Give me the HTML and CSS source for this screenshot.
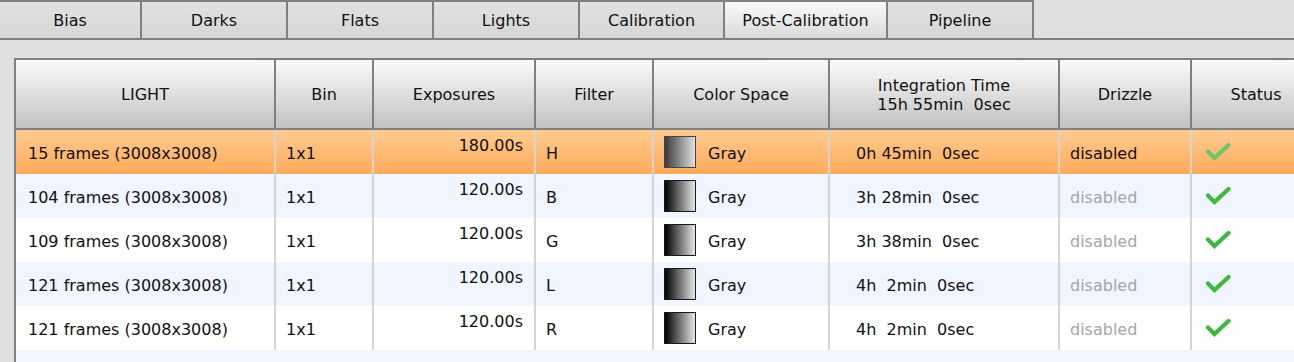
FILE: index.html
```html
<!DOCTYPE html>
<html>
<head>
<meta charset="utf-8">
<link rel="stylesheet" href="styles.css">
</head>
<body>
<div class="tabs">
  <div class="tab t1">Bias</div>
  <div class="tab">Darks</div>
  <div class="tab">Flats</div>
  <div class="tab">Lights</div>
  <div class="tab t5">Calibration</div>
  <div class="tab sel">Post-Calibration</div>
  <div class="tab">Pipeline</div>
</div>
<div class="panel">
  <div class="table">
    <div class="row head">
      <div class="hc first">LIGHT</div>
      <div class="hc">Bin</div>
      <div class="hc">Exposures</div>
      <div class="hc">Filter</div>
      <div class="hc">Color Space</div>
      <div class="hc two">Integration Time<br>15h 55min&nbsp; 0sec</div>
      <div class="hc">Drizzle</div>
      <div class="hc">Status</div>
    </div>

    <div class="row selrow">
      <div class="c first">15 frames (3008x3008)</div>
      <div class="c">1x1</div>
      <div class="c exp">180.00s</div>
      <div class="c">H</div>
      <div class="c cs"><span class="sw swsel"></span><span class="cst">Gray</span></div>
      <div class="c it">0h 45min&nbsp; 0sec</div>
      <div class="c">disabled</div>
      <div class="c st"><svg class="chk light" width="26" height="20" viewBox="0 0 26 20"><path d="M3 9.5 L9.5 16 L23.5 3"/></svg></div>
    </div>

    <div class="row alt">
      <div class="c first">104 frames (3008x3008)</div>
      <div class="c">1x1</div>
      <div class="c exp">120.00s</div>
      <div class="c">B</div>
      <div class="c cs"><span class="sw"></span><span class="cst">Gray</span></div>
      <div class="c it">3h 28min&nbsp; 0sec</div>
      <div class="c dis">disabled</div>
      <div class="c st"><svg class="chk" width="26" height="20" viewBox="0 0 26 20"><path d="M3 9.5 L9.5 16 L23.5 3"/></svg></div>
    </div>

    <div class="row">
      <div class="c first">109 frames (3008x3008)</div>
      <div class="c">1x1</div>
      <div class="c exp">120.00s</div>
      <div class="c">G</div>
      <div class="c cs"><span class="sw"></span><span class="cst">Gray</span></div>
      <div class="c it">3h 38min&nbsp; 0sec</div>
      <div class="c dis">disabled</div>
      <div class="c st"><svg class="chk" width="26" height="20" viewBox="0 0 26 20"><path d="M3 9.5 L9.5 16 L23.5 3"/></svg></div>
    </div>

    <div class="row alt">
      <div class="c first">121 frames (3008x3008)</div>
      <div class="c">1x1</div>
      <div class="c exp">120.00s</div>
      <div class="c">L</div>
      <div class="c cs"><span class="sw"></span><span class="cst">Gray</span></div>
      <div class="c it">4h&nbsp; 2min&nbsp; 0sec</div>
      <div class="c dis">disabled</div>
      <div class="c st"><svg class="chk" width="26" height="20" viewBox="0 0 26 20"><path d="M3 9.5 L9.5 16 L23.5 3"/></svg></div>
    </div>

    <div class="row">
      <div class="c first">121 frames (3008x3008)</div>
      <div class="c">1x1</div>
      <div class="c exp">120.00s</div>
      <div class="c">R</div>
      <div class="c cs"><span class="sw"></span><span class="cst">Gray</span></div>
      <div class="c it">4h&nbsp; 2min&nbsp; 0sec</div>
      <div class="c dis">disabled</div>
      <div class="c st"><svg class="chk" width="26" height="20" viewBox="0 0 26 20"><path d="M3 9.5 L9.5 16 L23.5 3"/></svg></div>
    </div>
  </div>
</div>
</body>
</html>
```

FILE: styles.css
```css
html, body {
  margin: 0;
  padding: 0;
}
body {
  width: 1294px;
  height: 362px;
  overflow: hidden;
  background: #e0e0e0;
  font-family: "DejaVu Sans", Verdana, sans-serif;
  font-size: 16px;
  color: #111;
}
.tabs {
  display: flex;
  height: 38px;
  border-bottom: 2px solid #808080;
}
.tab {
  box-sizing: border-box;
  width: 146px;
  height: 38px;
  border-top: 2px solid #808080;
  border-right: 2px solid #808080;
  background: linear-gradient(#e2e2e2, #d6d6d6);
  display: flex;
  align-items: center;
  justify-content: center;
  padding-top: 1px;
}
.tab.t1 { width: 142px; }
.tab.t5 { width: 145px; }
.tab.sel {
  width: 163px;
  background: linear-gradient(#fafafa, #dadada);
}
.panel {
  padding: 18px 0 0 14px;
}
.table {
  width: 1304px;
  height: 302px;
  border-top: 2px solid #808080;
  border-left: 2px solid #808080;
  background: #f0f5ff;
}
.row {
  display: grid;
  grid-template-columns: 258px 98px 162px 118px 176px 230px 132px 130px;
  height: 44px;
  background: #ffffff;
}
.row.alt { background: #f0f5ff; }
.row.selrow { background: linear-gradient(#ffca90, #ffab5b); }
.row.head {
  height: 68px;
  border-bottom: 2px solid #808080;
  background: linear-gradient(#fbfbfb, #c2c2c2);
}
.hc {
  border-left: 2px solid #808080;
  display: flex;
  align-items: center;
  justify-content: center;
  text-align: center;
  line-height: 19px;
  padding-top: 1px;
}
.hc.first, .c.first { border-left: none; }
.c {
  border-left: 2px solid #d4d4d4;
  display: flex;
  align-items: center;
  padding-left: 10px;
  padding-top: 2px;
  line-height: 19px;
  white-space: pre;
}
.c.first { padding-left: 12px; }
.c.exp {
  align-items: flex-start;
  justify-content: flex-end;
  padding: 6px 11px 0 0;
}
.c.cs { gap: 12px; padding-top: 0; }
.cst { padding-top: 2px; }
.c.it { padding-left: 26px; }
.c.dis { color: #a6a6a6; }
.c.st { padding-left: 13px; padding-top: 0; }
.sw {
  box-sizing: border-box;
  width: 32px;
  height: 32px;
  border: 1px solid #1a1a1a;
  background: linear-gradient(to right, #000000, #e6e6e6);
}
.sw.swsel {
  border-color: #444;
  background: linear-gradient(to right, #3a3a3a, #e0e0e0);
}
.chk path {
  fill: none;
  stroke: #3fb83f;
  stroke-width: 4.2;
  stroke-linecap: round;
  stroke-linejoin: miter;
}
.chk.light path { stroke: #6cc76a; }
```
